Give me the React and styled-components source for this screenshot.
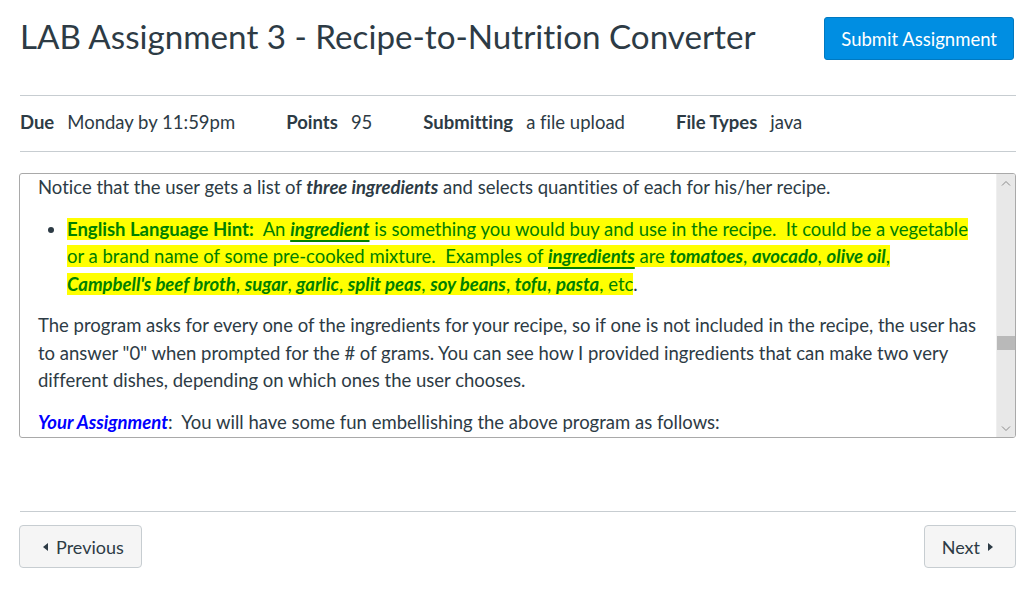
import React from "react";
import styled, { createGlobalStyle } from "styled-components";

const Global = createGlobalStyle`
  html, body { margin: 0; padding: 0; background: #fff; }
  body { font-family: Lato, "Open Sans", "Liberation Sans", sans-serif; color: #2d3b45; }
  * { box-sizing: border-box; }
`;

const Page = styled.div`
  width: 1024px;
  padding: 0 8px 0 20px;
`;

const Header = styled.header`
  display: flex;
  justify-content: space-between;
  align-items: flex-start;
`;

const Title = styled.h1`
  margin: 17px 0 0;
  font-size: 33.2px;
  font-weight: 400;
  line-height: 1.2;
  color: #2d3b45;
  font-variant-ligatures: none;
`;

const PrimaryButton = styled.button`
  margin: 17px 2px 0 0;
  height: 43px;
  padding: 0 16px;
  font-family: inherit;
  font-size: 18.5px;
  color: #fff;
  background: #008ee2;
  border: 1px solid #0079c1;
  border-radius: 3px;
  font-variant-ligatures: none;
`;

const Rule = styled.hr`
  margin: ${p => p.$top || 0}px 0 0;
  border: 0;
  border-top: 1px solid #c7cdd1;
  height: 0;
`;

const MetaRow = styled.ul`
  display: flex;
  list-style: none;
  margin: 0;
  padding: 14px 0 17px;
  font-size: 18.5px;
  line-height: 24px;
  font-variant-ligatures: none;
`;

const MetaItem = styled.li`
  display: flex;
  gap: 13px;
  margin-right: 51px;
`;

const MetaLabel = styled.span`
  font-weight: 700;
`;

const Frame = styled.div`
  display: flex;
  margin: 21px 0 0 -1px;
  height: 265px;
  border: 1px solid #a9a9a9;
  border-radius: 3px;
  overflow: hidden;
`;

const Content = styled.div`
  flex: 1;
  overflow: hidden;
  padding: 0 10px 0 18px;
  font-size: 18.5px;
  line-height: 27.5px;
  color: #2d3b45;
  font-variant-ligatures: none;
`;

const Para = styled.p`
  margin: 0 0 14px;
`;

const List = styled.ul`
  margin: 0 0 14px;
  padding-left: 29px;
  list-style: disc;
`;

const Hint = styled.span`
  background: #ffff00;
  color: #008000;
`;

const Term = styled.strong`
  font-style: italic;
  font-weight: 700;
  text-decoration: ${p => (p.$u ? "underline" : "none")};
  text-underline-offset: 4px;
  text-decoration-thickness: 1.5px;
`;

const Blue = styled.strong`
  color: #0000ff;
  font-style: italic;
`;

const Scrollbar = styled.div`
  width: 19px;
  display: flex;
  flex-direction: column;
  background: #e8e8e8;
  border-left: 1px solid #efefef;
`;

const ArrowCell = styled.div`
  height: 17px;
  display: flex;
  align-items: center;
  justify-content: center;
`;

const Track = styled.div`
  flex: 1;
`;

const Thumb = styled.div`
  margin-top: 145px;
  height: 14px;
  background: #b9b9b9;
`;

const Footer = styled.div`
  display: flex;
  justify-content: space-between;
  margin: 13px 0 0 -1px;
`;

const NavButton = styled.button`
  display: flex;
  align-items: center;
  gap: 7px;
  height: 43px;
  padding: ${p => (p.$next ? "0 22px 0 17px" : "0 17px 0 23px")};
  font-family: inherit;
  font-size: 18px;
  color: #2d3b45;
  background: #f5f5f5;
  border: 1px solid #c7cdd1;
  border-radius: 4px;
`;

const Caret = styled.svg`
  width: 6px;
  height: 8px;
  fill: #2d3b45;
`;

const Chevron = ({ up }) => (
  <svg width="10" height="6" viewBox="0 0 10 6">
    <path
      d={up ? "M1 5.5 L5 1.5 L9 5.5" : "M1 0.5 L5 4.5 L9 0.5"}
      fill="none"
      stroke="#8a8a8a"
      strokeWidth="1"
    />
  </svg>
);

export default function App() {
  return (
    <Page>
      <Global />
      <Header>
        <Title>LAB Assignment 3 - Recipe-to-Nutrition Converter</Title>
        <PrimaryButton>Submit Assignment</PrimaryButton>
      </Header>
      <Rule $top={35} />
      <MetaRow>
        <MetaItem><MetaLabel>Due</MetaLabel><span>Monday by 11:59pm</span></MetaItem>
        <MetaItem><MetaLabel>Points</MetaLabel><span>95</span></MetaItem>
        <MetaItem><MetaLabel>Submitting</MetaLabel><span>a file upload</span></MetaItem>
        <MetaItem><MetaLabel>File Types</MetaLabel><span>java</span></MetaItem>
      </MetaRow>
      <Rule />
      <Frame>
        <Content>
          <Para>
            Notice that the user gets a list of <Term>three ingredients</Term> and selects quantities of each for his/her recipe.
          </Para>
          <List>
            <li>
              <Hint>
                <strong>English Language Hint:</strong>{"\u00a0 "}An <Term $u>ingredient</Term> is something you would buy and use in the recipe.{"\u00a0 "}It could be a vegetable or a brand name of some pre-cooked mixture.{"\u00a0 "}Examples of <Term $u>ingredients</Term> are <Term>tomatoes</Term>, <Term>avocado</Term>, <Term>olive oil</Term>,<br /><Term>Campbell's beef broth</Term>, <Term>sugar</Term>, <Term>garlic</Term>, <Term>split peas</Term>, <Term>soy beans</Term>, <Term>tofu</Term>, <Term>pasta</Term>, etc
              </Hint>.
            </li>
          </List>
          <Para>
            The program asks for every one of the ingredients for your recipe, so if one is not included in the recipe, the user has to answer "0" when prompted for the # of grams. You can see how I provided ingredients that can make two very different dishes, depending on which ones the user chooses.
          </Para>
          <Para>
            <Blue>Your Assignment</Blue>:{"\u00a0 "}You will have some fun embellishing the above program as follows:
          </Para>
        </Content>
        <Scrollbar>
          <ArrowCell><Chevron up /></ArrowCell>
          <Track><Thumb /></Track>
          <ArrowCell><Chevron /></ArrowCell>
        </Scrollbar>
      </Frame>
      <Rule $top={73} />
      <Footer>
        <NavButton>
          <Caret viewBox="0 0 6 8"><path d="M5 0 L0 4 L5 8 Z" /></Caret>
          Previous
        </NavButton>
        <NavButton $next>
          Next
          <Caret viewBox="0 0 6 8"><path d="M1 0 L6 4 L1 8 Z" /></Caret>
        </NavButton>
      </Footer>
    </Page>
  );
}
